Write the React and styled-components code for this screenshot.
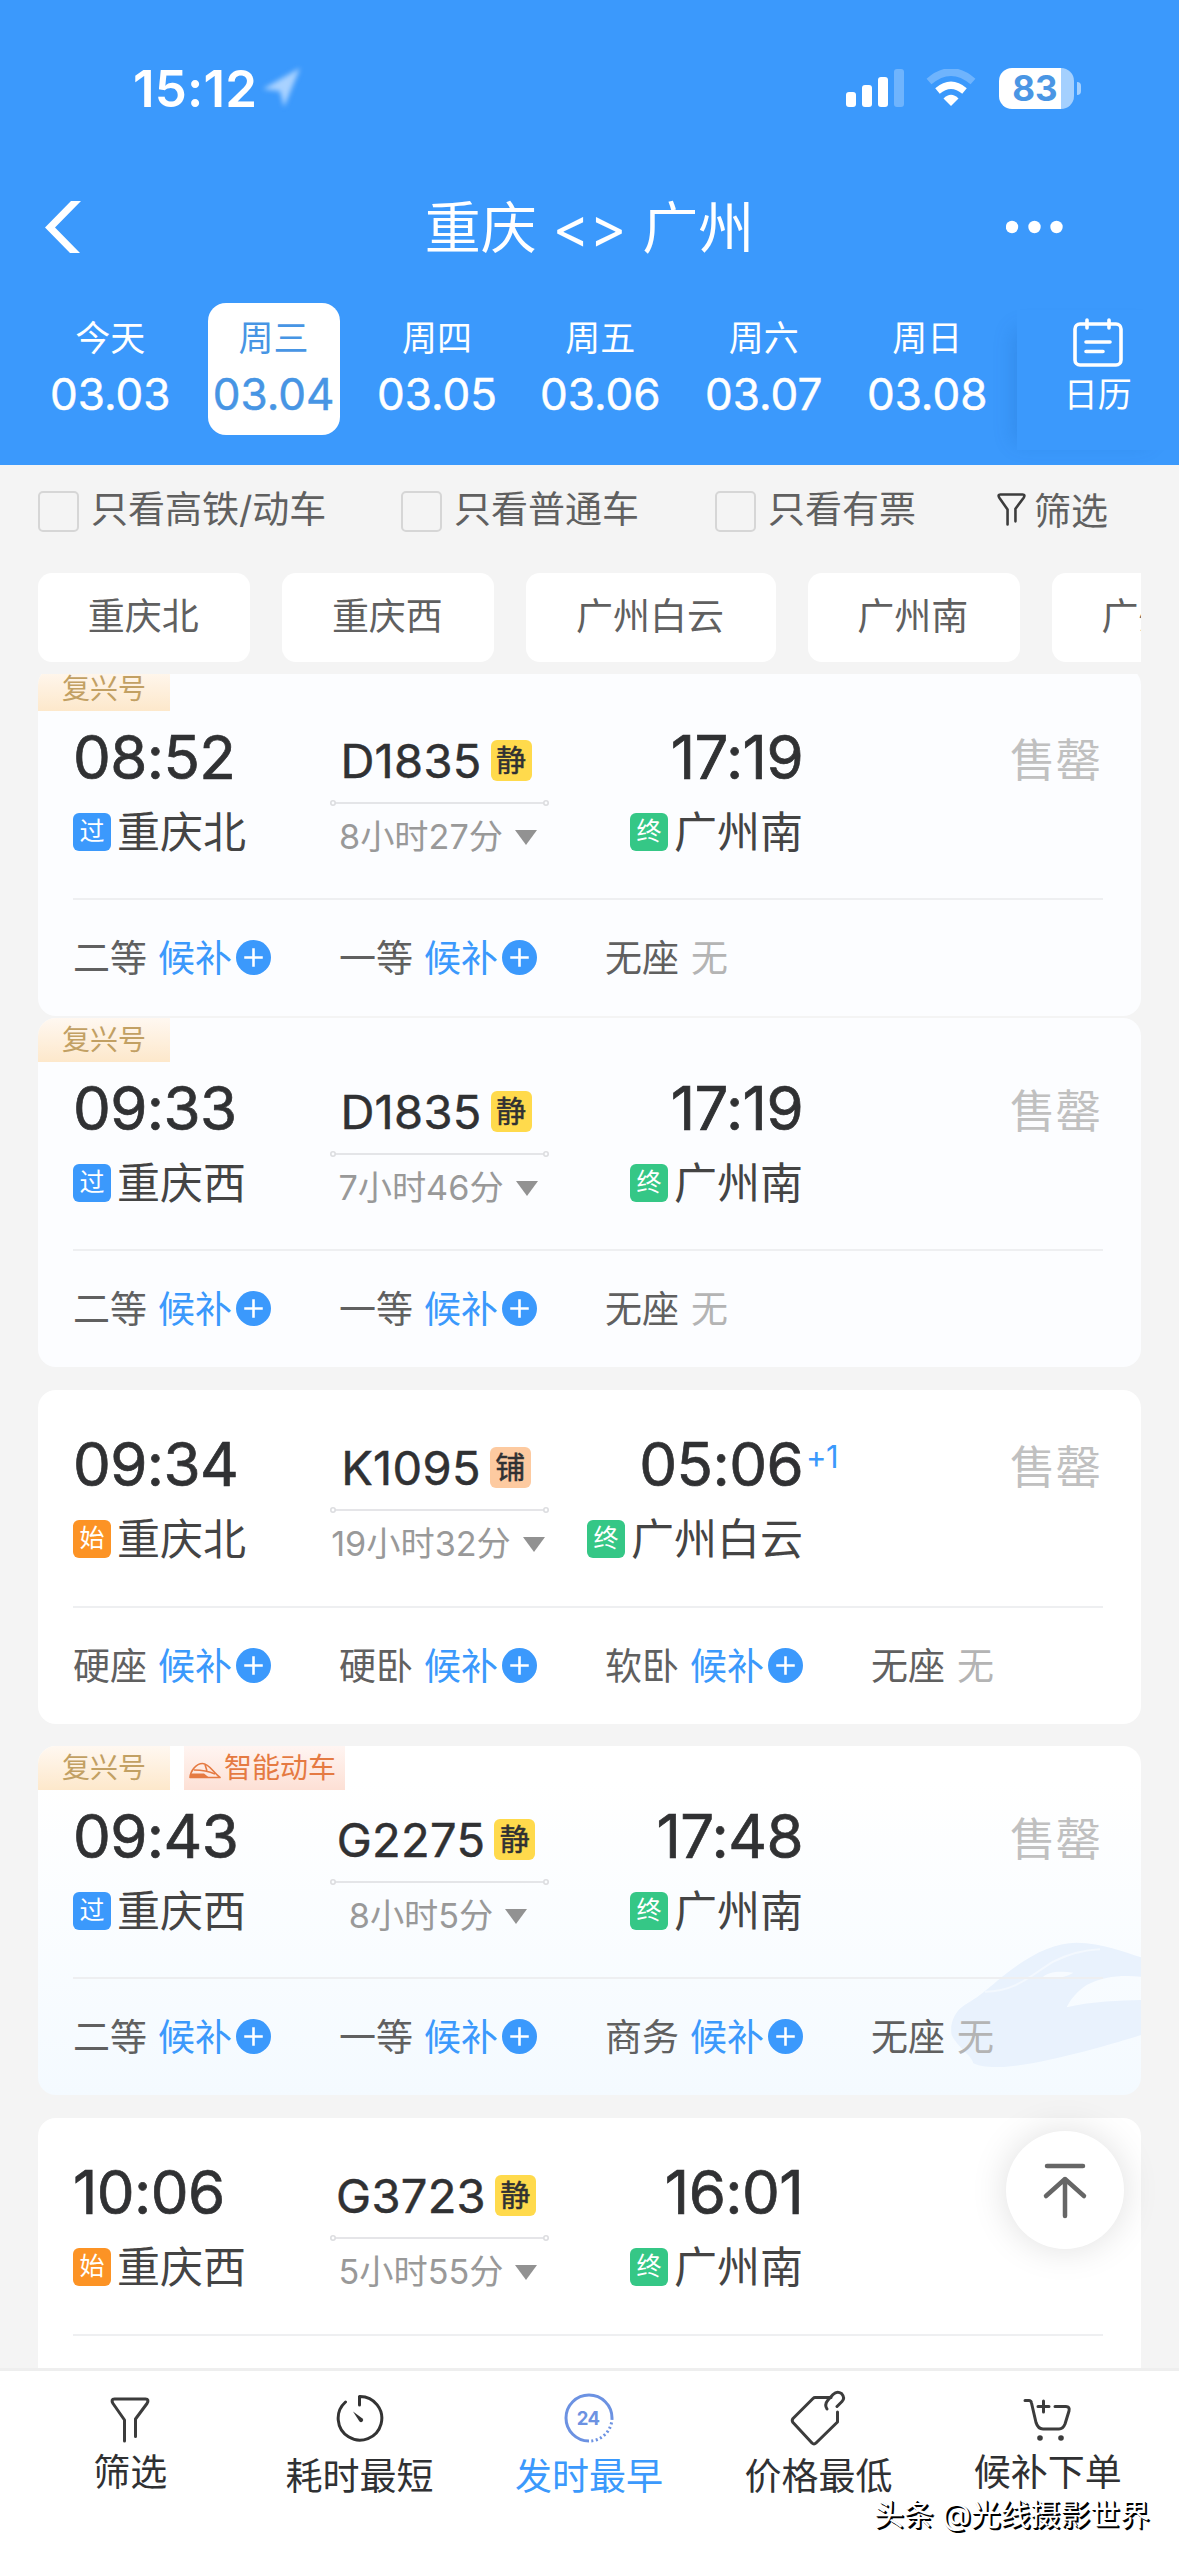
import React from 'react';
import styled, { createGlobalStyle, css } from 'styled-components'

const GlobalStyle = createGlobalStyle`
  * { box-sizing: border-box; }
  body {
    margin: 0;
    background: #f4f4f4;
    font-family: Inter, "Noto Sans CJK SC", sans-serif;
    color: #333;
  }
  svg { display: block; flex: none; }
`;

const Page = styled.div`
  width: 1179px;
  height: 2556px;
  display: flex;
  flex-direction: column;
  overflow: hidden;
  position: relative;
  white-space: nowrap;
`;

/* header */
const Header = styled.header`
  height: 465px;
  flex: none;
  background: #3b99fc;
  color: white;
`;

const StatusBar = styled.div`
  height: 176px;
  padding: 0 98px 0 133px;
  display: flex;
  justify-content: space-between;
  align-items: center;
`;

const Clock = styled.div`
  display: flex;
  align-items: center;
  font-size: 51px;
  font-weight: 600;
  letter-spacing: 0.2px;
`;

const StatusIcons = styled.div`
  display: flex;
  align-items: center;
`;

const Battery = styled.div`
  width: 75px;
  height: 41px;
  margin: 0 3px 0 23px;
  border-radius: 13px;
  background: linear-gradient(to right, white 62px, #a4d0fe 62px);
  color: #4a96e4;
  font-size: 35px;
  font-weight: 700;
  line-height: 41px;
  text-align: center;
  padding-right: 3px;
`;

const BatteryNub = styled.div`
  width: 4px;
  height: 13px;
  border-radius: 0 4px 4px 0;
  background: #a4d0fe;
`;

const TitleBar = styled.div`
  height: 104px;
  padding: 0 116px 2px 44px;
  display: flex;
  justify-content: space-between;
  align-items: center;
`;

const Title = styled.h1`
  margin: 2px 0 0 91px;
  font-size: 56px;
  font-weight: 400;
  line-height: 80px;
`;

const DateRow = styled.div`
  height: 185px;
  padding-left: 29px;
  display: flex;
`;

const DateTab = styled.div`
  width: 163.4px;
  height: 132px;
  margin-top: 23px;
  display: flex;
  justify-content: center;
`;

const DateBox = styled.div`
  width: 132px;
  height: 132px;
  padding: 12px 1px 0 0;
  border-radius: 18px;
  text-align: center;
  display: flex;
  flex-direction: column;
  align-items: center;
  ${props => props.$active && css`
    background: white;
    color: #4795e4;
  `}
`;

const Weekday = styled.div`
  font-size: 35px;
  line-height: 46px;
`;

const DateText = styled.div`
  font-size: 44px;
  line-height: 66px;
  -webkit-text-stroke: 0.5px currentColor;
`;

const Calendar = styled.div`
  width: 161px;
  margin: 30px 0 0 8px;
  height: 140px;
  padding: 8px 0 0 0;
  display: flex;
  flex-direction: column;
  align-items: center;
  font-size: 34px;
  line-height: 54px;
  box-shadow: -16px 6px 20px -14px rgba(20, 80, 160, 0.22);
`;

/* filters */
const FilterRow = styled.div`
  height: 108px;
  flex: none;
  padding: 0 0 18px 38px;
  display: flex;
  align-items: center;
  font-size: 37px;
  color: #606060;
`;

const CheckLabel = styled.div`
  width: ${props => props.$width}px;
  display: flex;
  align-items: center;
  gap: 12px;
  line-height: 40px;
`;

const CheckBox = styled.div`
  width: 41px;
  height: 41px;
  margin-top: 2px;
  border: 2px solid #d6d6d6;
  border-radius: 5px;
`;

const FilterButton = styled.div`
  margin-top: -2px;
  display: flex;
  align-items: center;
  gap: 8px;
`;

const StationRow = styled.div`
  height: 89px;
  flex: none;
  margin: 0 38px;
  display: flex;
  gap: 32px;
  overflow: hidden;
`;

const StationChip = styled.div`
  flex: none;
  padding: 0 51.5px 0 49.7px;
  border-radius: 14px;
  background: white;
  font-size: 37px;
  line-height: 88px;
  color: #606060;
`;

/* train list */
const List = styled.main`
  height: 1694px;
  flex: none;
  margin-top: 12px;
  padding: 0 38px;
  overflow: hidden;
`;

const Cards = styled.div`
  margin-top: -7px;
  display: flex;
  flex-direction: column;
  gap: 22.5px;
`;

const CardGroup = styled.div`
  display: flex;
  flex-direction: column;
  gap: 2px;
`;

const backgrounds = {
  plain: 'white',
  pale: '#fcfdff',
  smart: 'linear-gradient(to bottom, white 10%, #f4faff 100%)',
};

const Card = styled.section`
  position: relative;
  border-radius: 18px;
  overflow: hidden;
  background: ${props => backgrounds[props.$look]};
`;

const CardArt = styled.svg`
  position: absolute;
  right: 0;
  top: 174px;
`;

const Tags = styled.div`
  height: 44px;
  display: flex;
  gap: 14px;
`;

const Tag = styled.div`
  height: 44px;
  padding: 0 ${props => props.$smart ? '9px 0 5px' : '24px'};
  display: flex;
  align-items: center;
  gap: 3px;
  font-size: 28px;
  line-height: 40px;
  color: ${props => props.$smart ? '#e57a42' : '#c2a063'};
  background: linear-gradient(to bottom, ${props => props.$smart ? '#fff5f2, #fde0d5' : '#fff8f1, #fde8cb'});
`;

const Trip = styled.div`
  position: relative;
  height: ${props => props.$tagged ? 187 : 216}px;
  padding: ${props => props.$tagged ? 15.5 : 44}px 38px 0 35px;
  display: grid;
  grid-template-columns: 257px 219px 254px 1fr;
`;

const Stop = styled.div`
  display: flex;
  flex-direction: column;
  gap: 23px;
  align-items: ${props => props.$end ? 'flex-end' : 'flex-start'};
`;

const Time = styled.div`
  position: relative;
  height: 60px;
  font-size: 60px;
  line-height: 60px;
  letter-spacing: -0.6px;
  color: #303133;
  -webkit-text-stroke: 0.7px currentColor;
`;

const NextDay = styled.sup`
  position: absolute;
  left: 100%;
  top: 6px;
  margin-left: 3px;
  font-size: 31px;
  font-weight: 400;
  line-height: 34px;
  color: #3b99fc;
  -webkit-text-stroke: 0;
`;

const Station = styled.div`
  height: 44px;
  display: flex;
  align-items: center;
  gap: 6px;
  font-size: 43px;
  line-height: 44px;
  color: #444;
`;

const stopColors = { 过: '#3b99fc', 始: '#fc9325', 终: '#35c786' };

const StopBadge = styled.span`
  width: 38px;
  height: 38px;
  border-radius: 6px;
  background: ${props => stopColors[props.children]};
  color: white;
  font-size: 25px;
  line-height: 37px;
  text-align: center;
`;

const Middle = styled.div`
  padding-top: 10px;
  display: flex;
  flex-direction: column;
  align-items: center;
`;

const TrainNo = styled.div`
  height: 48px;
  display: flex;
  align-items: center;
  gap: 9px;
  margin-right: 7px;
  font-size: 47px;
  line-height: 48px;
  letter-spacing: 0.3px;
  color: #303133;
  -webkit-text-stroke: 0.5px currentColor;
`;

const KindBadge = styled.span`
  width: 41px;
  height: 41px;
  border-radius: 6px;
  background: ${props => props.children === '静' ? '#ffda4c' : '#fdcaa0'};
  font-size: 30px;
  line-height: 40px;
  text-align: center;
`;

const RouteLine = styled.svg`
  margin-top: 15px;
`;

const Duration = styled.div`
  height: 44px;
  margin: 9px 3px 0 0;
  display: flex;
  align-items: center;
  gap: 12px;
  font-size: 34.2px;
  line-height: 44px;
  color: #999;
`;

const Triangle = styled.span`
  margin-top: 1px;
  border: 11.5px solid transparent;
  border-top: 15px solid #929292;
  border-bottom: 0;
`;

const SoldOut = styled.div`
  padding: 4px 2px 0 0;
  font-size: 45.5px;
  line-height: 60px;
  text-align: right;
  color: #c0c0c0;
`;

const Seats = styled.div`
  position: relative;
  height: 118px;
  margin: 0 38px 0 35px;
  border-top: 2px solid #eeeff1;
  display: grid;
  grid-template-columns: repeat(4, 266px);
  align-items: center;
  font-size: 37px;
  color: #606060;
`;

const Seat = styled.div`
  height: 54px;
  margin-top: -4px;
  display: flex;
  align-items: center;
`;

const Waitlist = styled.span`
  margin-left: 11px;
  display: flex;
  align-items: center;
  gap: 4px;
  color: #3b99fc;
`;

const NoSeat = styled.span`
  margin-left: 12px;
  color: #b4b4b4;
`;

const TopButton = styled.button`
  position: absolute;
  left: 1006px;
  top: 2131px;
  width: 118px;
  height: 118px;
  padding: 0;
  border: 0;
  border-radius: 50%;
  background: white;
  box-shadow: 0 0 36px rgba(0, 0, 0, 0.13);
  display: flex;
  align-items: center;
  justify-content: center;
`;

/* bottom bar */
const BottomBar = styled.footer`
  height: 188px;
  flex: none;
  padding: 0 16px;
  border-top: 3px solid #eee;
  background: white;
  display: grid;
  grid-template-columns: repeat(5, 1fr);
`;

const IconSlot = styled.div`
  height: 64px;
  display: flex;
  align-items: center;
`;

const BottomItem = styled.div`
  padding: ${props => props.$raised ? 22 : 14}px 1px 0 0;
  display: flex;
  flex-direction: column;
  align-items: center;
  font-size: 37px;
  line-height: 54px;
  color: ${props => props.$active ? '#3b99fc' : '#303133'};

  ${IconSlot} {
    height: ${props => props.$raised ? 53 : 65}px;
  }
`;

const Credit = styled.div`
  position: absolute;
  left: 874px;
  top: 2492px;
  font-size: 29.8px;
  line-height: 44px;
  color: white;
  text-shadow: 2px 2px 0 black, 1px 1px 0 black;
`;

const dates = [
  ['今天', '03.03'],
  ['周三', '03.04'],
  ['周四', '03.05'],
  ['周五', '03.06'],
  ['周六', '03.07'],
  ['周日', '03.08'],
];

const stations = ['重庆北', '重庆西', '广州白云', '广州南', '广州东'];

const northD1835 = {
  look: 'pale', tags: ['复兴号'],
  from: ['08:52', '过', '重庆北'], to: ['17:19', '终', '广州南'],
  no: 'D1835', kind: '静', duration: '8小时27分',
  seats: [['二等', true], ['一等', true], ['无座', false]],
};

const westD1835 = {
  ...northD1835,
  from: ['09:33', '过', '重庆西'],
  duration: '7小时46分',
};

const otherTrains = [
  {
    look: 'plain',
    from: ['09:34', '始', '重庆北'], to: ['05:06', '终', '广州白云'], nextDay: '+1',
    no: 'K1095', kind: '铺', duration: '19小时32分',
    seats: [['硬座', true], ['硬卧', true], ['软卧', true], ['无座', false]],
  },
  {
    look: 'smart', tags: ['复兴号', '智能动车'],
    from: ['09:43', '过', '重庆西'], to: ['17:48', '终', '广州南'],
    no: 'G2275', kind: '静', duration: '8小时5分',
    seats: [['二等', true], ['一等', true], ['商务', true], ['无座', false]],
  },
  {
    look: 'plain',
    from: ['10:06', '始', '重庆西'], to: ['16:01', '终', '广州南'],
    no: 'G3723', kind: '静', duration: '5小时55分',
    seats: [],
  },
];

const FunnelIcon = ({ width, height, stroke }) => (
  <svg width={width} height={height} viewBox="0 0 40 46" fill="none" stroke="#3c3c3c" strokeWidth={stroke} strokeLinecap="round" strokeLinejoin="round">
    <path d="M14.5 44V23L3 6.500Q.5 2 4.500 2H35.500Q39.500 2 37 6.500L25.500 22V39.500" />
  </svg>
);

const TimerIcon = () => (
  <svg width="48" height="50" viewBox="0 0 48 50" fill="none" stroke="#333" strokeWidth="3" strokeLinecap="round" strokeLinejoin="round">
    <path d="M23.500 12V3.500A21.800 21.800 0 1 1 9.500 9" />
    <path d="M17 18.500L23.500 28.500A2 2 0 0 0 26.500 25.500Z" fill="#333" stroke="none" />
  </svg>
);

const DayIcon = () => (
  <svg width="50" height="50" viewBox="0 0 50 50" fill="none" stroke="#6c92e2" strokeWidth="3">
    <path d="M25 48A23 23 0 1 1 48 25" />
    <path d="M48 25A23 23 0 0 1 25 48" strokeDasharray="2 2.500" />
    <text x="24" y="32" textAnchor="middle" fontSize="18.500" fontWeight="700" letterSpacing="-.8" fill="#6c92e2" stroke="none">24</text>
  </svg>
);

const TagIcon = () => (
  <svg width="56" height="56" viewBox="0 0 56 56" fill="none" stroke="#3c3c3c" strokeWidth="3" strokeLinecap="round" strokeLinejoin="round">
    <path d="M41 7.500H25Q24 7.500 23 8.500L3 28.500Q1.500 30.500 3 32.500L22 53Q24 55 26 53L47.500 32V22" />
    <path d="M37 19Q34 14.500 38 10L43 4.500Q47 .5 51.500 3.500Q55.500 8 52 11.500L47 16.500" />
  </svg>
);

const CartIcon = () => (
  <svg width="50" height="46" viewBox="0 0 50 46" fill="none" stroke="#3c3c3c" strokeWidth="3" strokeLinecap="round" strokeLinejoin="round">
    <path d="M2 3.500H6Q8 3.500 8.500 6L13 25.500Q15 32 20 32H36Q40 32 42 27L46 14Q47 9.500 43 9.500H32" />
    <path d="M20.500 4V15M15 9.500H26" />
    <circle cx="17" cy="41" r="2.800" fill="#3c3c3c" stroke="none" />
    <circle cx="38" cy="41" r="2.800" fill="#3c3c3c" stroke="none" />
  </svg>
);

const PlusMark = styled.svg`
  margin-top: 3px;
`;

const PlusIcon = () => (
  <PlusMark width="35" height="35" viewBox="0 0 34 34" stroke="white" strokeWidth="2.500">
    <circle cx="17" cy="17" r="17" fill="#3b99fc" stroke="none" />
    <path d="M8 17H26M17 8V26" />
  </PlusMark>
);

const TrainMark = styled.svg`
  margin-top: 6px;
`;

const SmartTrainIcon = () => (
  <TrainMark width="32" height="18" viewBox="0 0 32 18" fill="none" stroke="#e57a42" strokeWidth="1.600" strokeLinejoin="round">
    <path d="M1 15.500C1.500 9 7 1.500 13.500 1.500C20 1.500 24 10 31 15.500Z" />
    <path d="M5 8Q17 8 26 12M16 2.500L18 9" />
    <path d="M2 11.500H15L20 15.500H1.500Z" fill="#e57a42" stroke="none" />
  </TrainMark>
);

const TrainArt = () => (
  <CardArt width="221" height="152" viewBox="0 0 663 456">
    <path fill="#e9f2fd" d="M160 430C155 405 115 385 95 345C88 310 105 275 130 258C195 220 220 190 260 160C330 105 400 68 470 68C550 70 610 95 663 112V170C600 165 550 170 500 195C470 215 450 240 440 262C520 243 600 242 663 240V345C520 390 330 440 240 441C200 442 175 438 160 430Z" />
    <path fill="#f7fbff" d="M365 175C380 155 420 152 460 158C440 172 400 178 365 175Z" />
    <path fill="none" stroke="#f3f8fe" strokeWidth="6" d="M195 215C290 215 340 160 400 125C450 100 490 90 540 88" />
  </CardArt>
);

const BackIcon = () => (
  <svg width="38" height="52" viewBox="0 0 38 52" fill="white">
    <path d="M27 0H37L11 26.500L36 52H26L1 26.500Z" />
  </svg>
);

const MoreIcon = () => (
  <svg width="57" height="14" viewBox="0 0 57 14" fill="white">
    <circle cx="6" cy="7" r="6.200" />
    <circle cx="28.500" cy="7" r="6.200" />
    <circle cx="50.500" cy="7" r="6.200" />
  </svg>
);

const LocationArrow = styled.svg`
  filter: blur(2.5px);
`;

const WifiIcon = styled.svg`
  margin-left: 22px;
`;

const SeatItem = ({ name, waitlist }) => (
  <Seat>
    {name}
    {waitlist ? <Waitlist>候补<PlusIcon /></Waitlist> : <NoSeat>无</NoSeat>}
  </Seat>
);

const TrainCard = ({ train }) => (
  <Card $look={train.look}>
    {train.look === 'smart' && <TrainArt />}
    {train.tags && (
      <Tags>
        {train.tags.map(tag => (
          <Tag key={tag} $smart={tag === '智能动车'}>
            {tag === '智能动车' && <SmartTrainIcon />}
            {tag}
          </Tag>
        ))}
      </Tags>
    )}
    <Trip $tagged={!!train.tags}>
      <Stop>
        <Time>{train.from[0]}</Time>
        <Station><StopBadge>{train.from[1]}</StopBadge>{train.from[2]}</Station>
      </Stop>
      <Middle>
        <TrainNo>{train.no}<KindBadge>{train.kind}</KindBadge></TrainNo>
        <RouteLine width="219" height="6" viewBox="0 0 219 6" fill="none" stroke="#dcdde0" strokeWidth="1.600">
          <circle cx="3" cy="3" r="2.200" />
          <path d="M5.500 3H213.500" />
          <circle cx="216" cy="3" r="2.200" />
        </RouteLine>
        <Duration>{train.duration}<Triangle /></Duration>
      </Middle>
      <Stop $end>
        <Time>{train.to[0]}{train.nextDay && <NextDay>{train.nextDay}</NextDay>}</Time>
        <Station><StopBadge>{train.to[1]}</StopBadge>{train.to[2]}</Station>
      </Stop>
      <SoldOut>售罄</SoldOut>
    </Trip>
    <Seats>
      {train.seats.map(([name, waitlist]) => <SeatItem key={name} name={name} waitlist={waitlist} />)}
    </Seats>
  </Card>
);

const App = () => {
  return (
    <Page>
      <GlobalStyle />
      <Header>
        <StatusBar>
          <Clock>
            15:12
            <LocationArrow width="48" height="52" viewBox="0 0 48 52">
              <path d="M6 27L43 6L27 45L23 29Z" fill="#a9d2ff" />
            </LocationArrow>
          </Clock>
          <StatusIcons>
            <svg width="58" height="38" viewBox="0 0 58 38" fill="white">
              <rect x="0" y="23" width="10" height="15" rx="3" />
              <rect x="16" y="16" width="10" height="22" rx="3" />
              <rect x="32" y="8" width="10" height="30" rx="3" />
              <rect x="48" y="0" width="10" height="38" rx="3" fill="#6fb4fd" />
            </svg>
            <WifiIcon width="50" height="38" viewBox="0 0 50 38" fill="none">
              <path d="M3 12.500Q25 -6.500 47 12.500" stroke="#6fb4fd" strokeWidth="7.500" />
              <path d="M11.500 22Q25 10.500 38.500 22" stroke="white" strokeWidth="7" />
              <path d="M17.500 29.500Q25 22 32.500 29.500L25 37Z" fill="white" />
            </WifiIcon>
            <Battery>83</Battery>
            <BatteryNub />
          </StatusIcons>
        </StatusBar>
        <TitleBar>
          <BackIcon />
          <Title>重庆 &lt;&gt; 广州</Title>
          <MoreIcon />
        </TitleBar>
        <DateRow>
          {dates.map(([day, date], i) => (
            <DateTab key={date}>
              <DateBox $active={i === 1}>
                <Weekday>{day}</Weekday>
                <DateText>{date}</DateText>
              </DateBox>
            </DateTab>
          ))}
          <Calendar>
            <svg width="50" height="50" viewBox="0 0 50 50" fill="none" stroke="white" strokeWidth="3.600" strokeLinecap="round">
              <rect x="2" y="6" width="46" height="41" rx="5" />
              <path d="M14 2V10M36 2V10M13 24H37M13 33.500H30" />
            </svg>
            日历
          </Calendar>
        </DateRow>
      </Header>

      <FilterRow>
        <CheckLabel $width={363}><CheckBox />只看高铁/动车</CheckLabel>
        <CheckLabel $width={314}><CheckBox />只看普通车</CheckLabel>
        <CheckLabel $width={282}><CheckBox />只看有票</CheckLabel>
        <FilterButton><FunnelIcon width={29} height={33} stroke={3.6} />筛选</FilterButton>
      </FilterRow>
      <StationRow>
        {stations.map(name => <StationChip key={name}>{name}</StationChip>)}
      </StationRow>

      <List>
        <Cards>
          <CardGroup>
            <TrainCard train={northD1835} />
            <TrainCard train={westD1835} />
          </CardGroup>
          {otherTrains.map(train => <TrainCard key={train.no} train={train} />)}
        </Cards>
      </List>

      <BottomBar>
        <BottomItem $raised><IconSlot><FunnelIcon width={40} height={46} stroke={3} /></IconSlot>筛选</BottomItem>
        <BottomItem><IconSlot><TimerIcon /></IconSlot>耗时最短</BottomItem>
        <BottomItem $active><IconSlot><DayIcon /></IconSlot>发时最早</BottomItem>
        <BottomItem><IconSlot><TagIcon /></IconSlot>价格最低</BottomItem>
        <BottomItem $raised><IconSlot><CartIcon /></IconSlot>候补下单</BottomItem>
      </BottomBar>

      <TopButton>
        <svg width="46" height="58" viewBox="0 0 46 58" fill="none" stroke="#666" strokeWidth="4.500" strokeLinecap="round" strokeLinejoin="round">
          <path d="M5 5H41M23 18V55M4 35L23 18L42 35" />
        </svg>
      </TopButton>
      <Credit>头条 @光线摄影世界</Credit>
    </Page>
  );
}

export default App;
